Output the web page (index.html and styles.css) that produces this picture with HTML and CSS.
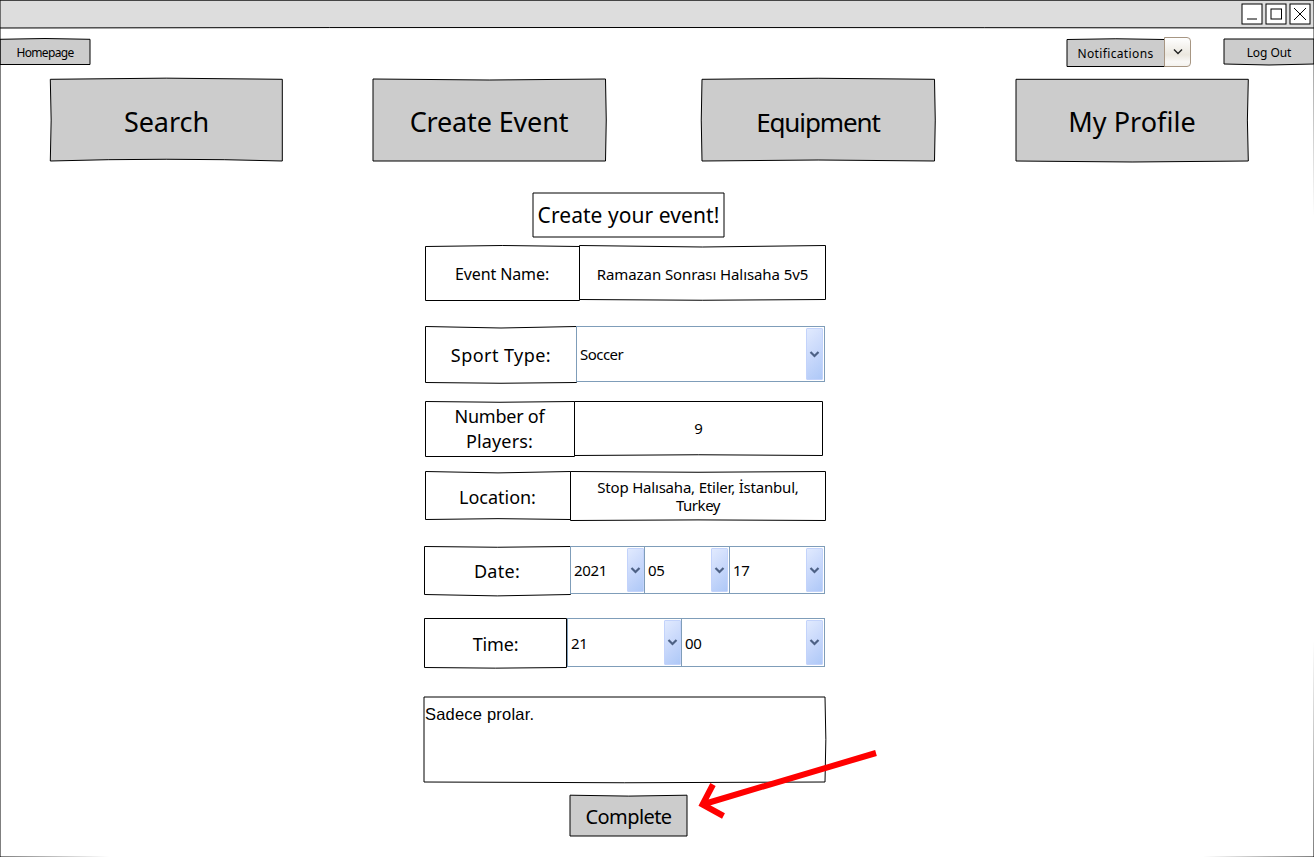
FILE: index.html
```html
<!DOCTYPE html>
<html lang="en">
<head>
<meta charset="utf-8">
<title>Create Event</title>
<link rel="stylesheet" href="styles.css">
</head>
<body>
<main class="window">
  <svg class="frame" width="1314" height="857" viewBox="0 0 1314 857"><path d="M0 .2H1314Q1316 428 1314 857Q657 861 0 857Z"/></svg>

  <header class="titlebar">
    <svg class="rule" width="1314" height="28"><path d="M0 28Q330 27.4 657 27.5T1314 28"/></svg>
    <div class="window-buttons">
      <svg width="22" height="22"><rect x="1" y="1" width="20" height="20"/><path d="M6 16H16"/></svg>
      <svg width="22" height="22"><rect x="1" y="1" width="20" height="20"/><rect x="6" y="6" width="10.500" height="10"/></svg>
      <svg width="22" height="22"><rect x="1" y="1" width="20" height="20"/><path d="M5 5L17 17M17 5L5 17"/></svg>
    </div>
  </header>

  <div class="toolbar">
    <button class="box grey home"><svg><path d="M0 .3Q45 -1.300 90 .3V25.500H0Z"/></svg><span class="t-home">Homepage</span></button>
    <div class="split">
      <button class="box grey notify"><svg><path d="M0 .5Q49 -1 97.500 .5V27.500H0Z"/></svg><span class="t-notify">Notifications</span></button>
      <button class="drop"><svg width="12" height="8"><path d="M2 1.500L6 5.500L10 1.500"/></svg></button>
    </div>
    <button class="box grey logout"><svg><path d="M0 0H90V25Q45 27 0 25Z"/></svg><span class="t-logout">Log Out</span></button>
  </div>

  <nav class="nav">
    <button class="box grey search"><svg><path d="M.3 .3Q116 -2 232.300 .3V82Q116 78.500 .3 82Q2 41 .3 .3Z"/></svg><span class="t-search">Search</span></button>
    <button class="box grey create"><svg><path d="M0 0Q116 2 232.500 0Q234 41 232.500 82H0Z"/></svg><span class="t-create">Create Event</span></button>
    <button class="box grey equip"><svg><path d="M0 .3Q116 -1.800 232.500 .3Q234 41 232.500 82Q116 80 0 82Q-1.500 41 0 .3Z"/></svg><span class="t-equip">Equipment</span></button>
    <button class="box grey profile"><svg><path d="M0 .3H232.300Q230.500 41 232.300 82Q116 84 0 82Z"/></svg><span class="t-profile">My Profile</span></button>
  </nav>

  <h1 class="box heading"><svg><path d="M0 0H191V44H0Z"/></svg><span class="t-heading">Create your event!</span></h1>

  <form class="form">
    <div class="row event">
      <div class="box label"><svg><path d="M.5 .5Q77 -1.500 154.500 .5V54.500H.5Z"/></svg><span class="t-event">Event Name:</span></div>
      <div class="box field"><svg><path d="M.5 -.5Q123 2.500 246.500 -.5V53.500Q123 55 .5 53.500Z"/></svg><span class="t-ramazan">Ramazan Sonrası Halısaha 5v5</span></div>
    </div>
    <div class="row sport">
      <div class="box label"><svg><path d="M.5 .5Q76 3.500 151.500 .5V56.500Q76 58 .5 56.500Z"/></svg><span class="t-sport">Sport Type:</span></div>
      <div class="combo w249"><span class="t-soccer">Soccer</span><i><svg width="11" height="7"><path d="M1.500 1L5.500 5L9.500 1"/></svg></i></div>
    </div>
    <div class="row players">
      <div class="box label"><svg><path d="M.5 .5Q75 2 149.500 .5V55.500H.5Z"/></svg><span><span class="t-number">Number of</span><br><span class="t-players">Players:</span></span></div>
      <div class="box field"><svg><path d="M.5 .5H248.500V54.500Q124 53 .5 54.500Z"/></svg><span class="t-nine">9</span></div>
    </div>
    <div class="row location">
      <div class="box label"><svg><path d="M.5 .5Q73 3.300 145.500 .5V48.500Q73 46.800 .5 48.500Z"/></svg><span class="t-location">Location:</span></div>
      <div class="box field"><svg><path d="M.5 .5Q128 2 255.500 .5V49.500Q128 48.300 .5 49.500Z"/></svg><span class="address">Stop Halısaha, Etiler, İstanbul,<br><span class="t-turkey">Turkey</span></span></div>
    </div>
    <div class="row date">
      <div class="box label"><svg><path d="M.5 .5Q73 2 146.500 .5V48.500Q73 51.300 .5 48.500Z"/></svg><span class="t-date">Date:</span></div>
      <div class="combo w75"><span class="t-digits">2021</span><i><svg width="11" height="7"><path d="M1.500 1L5.500 5L9.500 1"/></svg></i></div>
      <div class="combo w86"><span class="t-digits">05</span><i><svg width="11" height="7"><path d="M1.500 1L5.500 5L9.500 1"/></svg></i></div>
      <div class="combo w96"><span class="t-digits">17</span><i><svg width="11" height="7"><path d="M1.500 1L5.500 5L9.500 1"/></svg></i></div>
    </div>
    <div class="row time">
      <div class="box label"><svg><path d="M.5 .5H142.500V49.500Q71 50.800 .5 49.500Z"/></svg><span class="t-time">Time:</span></div>
      <div class="combo w115"><span class="t-digits">21</span><i><svg width="11" height="7"><path d="M1.500 1L5.500 5L9.500 1"/></svg></i></div>
      <div class="combo w144"><span class="t-digits">00</span><i><svg width="11" height="7"><path d="M1.500 1L5.500 5L9.500 1"/></svg></i></div>
    </div>
    <div class="box notes"><svg><path d="M0 0H401Q402.700 42 401 85Q200 86.500 0 85Z"/></svg><span>Sadece prolar.</span></div>
    <button type="button" class="box grey complete"><svg><path d="M0 .2Q59 2 117 .2V41H0Z"/></svg><span class="t-complete">Complete</span></button>
  </form>

  <svg class="arrow" width="200" height="80" viewBox="690 745 200 80"><path d="M876 753L702.500 804.500M713 784.500L702.500 804.500L723.500 816"/></svg>
</main>
</body>
</html>
```
FILE: styles.css
```css
* { box-sizing: border-box; }

body {
  margin: 0;
  background: #fff;
  color: #000;
  font-family: "Comic Sans MS", "Noto Sans", sans-serif;
}

.window {
  position: relative;
  width: 1314px;
  height: 857px;
  overflow: hidden;
}

button { border: 0; padding: 0; background: none; font: inherit; color: inherit; }

/* hand-drawn boxes: outline and label share one grid cell */
.box {
  display: grid;
  grid-template: 100% / 100%;
  place-items: center;
}
.box > * { grid-area: 1 / 1; }
.box > svg {
  width: 100%;
  height: 100%;
  overflow: visible;
  fill: #fff;
  stroke: #000;
  stroke-width: 1;
}
.box > span { z-index: 1; white-space: nowrap; text-align: center; }
.grey > svg { fill: #ccc; }

.frame {
  position: absolute;
  inset: 0;
  z-index: 2;
  fill: none;
  stroke: #000;
  pointer-events: none;
}

.titlebar {
  display: grid;
  height: 28px;
  background: #ddd;
}
.titlebar > * { grid-area: 1 / 1; }
.rule { overflow: visible; fill: none; stroke: #000; }
.window-buttons {
  display: flex;
  justify-content: flex-end;
  gap: 2px;
  padding: 3px 3px 0 0;
}
.window-buttons svg { fill: #fff; stroke: #000; }

.toolbar { display: flex; height: 51px; align-items: flex-start; }
.home { width: 90px; height: 25px; margin-top: 11px; }
.split { display: flex; margin: 9px 0 0 977px; }
.notify { width: 97px; height: 27px; margin-top: 2px; }
.drop {
  display: grid;
  place-items: center;
  width: 27px;
  height: 30px;
  border: 1px solid #a79683;
  border-radius: 0 4px 4px 0;
  background: linear-gradient(#fff, #f3f1ec 35%, #ebe7df 60%, #f9f8f6 85%, #f4f2ee);
}
.drop svg { fill: none; stroke: #222; stroke-width: 1.4; }
.logout { width: 90px; height: 25px; margin: 11px 0 0 33px; }

.nav { display: flex; height: 114px; align-items: flex-start; padding-left: 50px; }
.nav .box { width: 232px; height: 82px; font-size: 27px; }
.create { margin-left: 91px; }
.equip { margin-left: 97px; }
.profile { margin-left: 82px; }

.heading { width: 191px; height: 44px; margin: 0 0 0 533px; font-size: 21px; font-weight: 400; }

.form { display: flex; flex-direction: column; width: 402px; margin-left: 424px; }
.row { display: flex; font-size: 18px; }
.row .field { flex: 1; font-family: "Noto Sans", sans-serif; font-size: 15px; }

.event { height: 55px; margin: 9px 0 0 1px; font-size: 16px; }
.event .label { width: 154px; }
.event .field { font-family: "Comic Sans MS", "Noto Sans", sans-serif; }
.sport { height: 56px; margin: 25px 0 0 1px; }
.sport .label { width: 151px; }
.players { height: 55px; margin: 19px 3px 0 1px; line-height: 25px; }
.players .label { width: 149px; }
.location { height: 50px; margin: 15px 0 0 1px; }
.location .label { width: 145px; }
.date { height: 48px; margin-top: 25px; }
.date .label { width: 146px; }
.time { height: 49px; margin-top: 24px; }
.time .label { width: 143px; }

.combo {
  display: flex;
  align-items: center;
  justify-content: space-between;
  padding: 1px 1px 1px 3px;
  border: 1px solid #7f9db9;
  background: #fff;
  font: 15px "Noto Sans", sans-serif;
}
.combo + .combo { margin-left: -1px; }
.combo i {
  display: grid;
  place-items: center;
  align-self: stretch;
  width: 17px;
  border: 1px solid #c3d3fb;
  border-radius: 1px;
  background: linear-gradient(135deg, #e1eafe, #c8d8fb 50%, #aec8f7);
}
.combo i svg { fill: none; stroke: #4d6185; stroke-width: 2.2; }
.w249 { width: 249px; }
.w75 { width: 75px; padding-right: 0; }
.w86 { width: 86px; }
.w96 { width: 96px; }
.w115 { width: 115px; padding-right: 0; }
.w144 { width: 144px; }

.notes {
  width: 401px;
  height: 85px;
  margin-top: 30px;
  font: 16.5px/18px "Liberation Sans", Arial, sans-serif;
  letter-spacing: .2px;
}
.notes > span { place-self: start; padding: 8px 0 0 1px; }

.complete { width: 117px; height: 41px; margin: 13px 0 0 146px; font-size: 20px; }

.t-home { font-size: 12px; letter-spacing: -.66px; padding-top: 2px; }
.t-notify { font-size: 12px; letter-spacing: .36px; padding-top: 2px; }
.t-logout { font-size: 12px; letter-spacing: -.06px; padding-top: 2px; }
.t-search { letter-spacing: -.05px; padding: 3px 0 0 1px; }
.t-create { letter-spacing: -.15px; padding-top: 3px; }
.t-equip { font-size: 26px; letter-spacing: -1.100px; padding-top: 3px; }
.t-profile { letter-spacing: .05px; padding-top: 3px; }
.t-heading { letter-spacing: .06px; }
.t-event { letter-spacing: -.1px; }
.t-ramazan { letter-spacing: -.09px; }
.t-sport { letter-spacing: .45px; padding: 2px 0 0 1px; }
.t-number { letter-spacing: -.23px; }
.t-players { letter-spacing: .14px; }
.t-location { letter-spacing: -.03px; padding-top: 2px; }
.t-date { letter-spacing: .28px; padding-top: 2px; }
.t-time { letter-spacing: -.16px; padding-top: 2px; }
.t-soccer { letter-spacing: -.53px; }
.t-digits { letter-spacing: -.3px; }
.t-complete { letter-spacing: -.56px; padding-top: 2px; }
.address { line-height: 18px; letter-spacing: -.2px; }
.t-turkey { letter-spacing: -.45px; }

.arrow {
  position: absolute;
  left: 690px;
  top: 745px;
  fill: none;
  stroke: #f00;
  stroke-width: 6;
}
```
